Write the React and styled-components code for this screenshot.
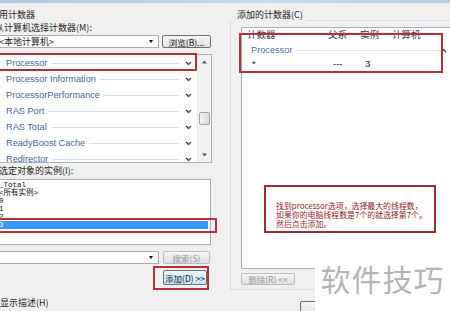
import React from 'react'
import styled, { createGlobalStyle } from 'styled-components'

const GlobalStyle = createGlobalStyle`
    html, body {
        margin: 0;
        padding: 0;
        background: #f0f0f0;
    }
    body {
        font-family: "Liberation Sans", "Noto Sans CJK SC", sans-serif;
    }
`

const cjk = `"Noto Sans CJK SC", "Liberation Sans", sans-serif`
const latin = `"Liberation Sans", "Noto Sans CJK SC", sans-serif`

const Window = styled.div`
    position: relative;
    width: 450px;
    height: 311px;
    overflow: hidden;
    background: #f0f0f0;
`

const TitleStrip = styled.div`
    height: 3px;
    background: linear-gradient(90deg, #aec8e4, #c9dbee 60%, #b7cfe8);
`

const Columns = styled.div`
    display: flex;
`

const LeftPane = styled.div`
    margin-left: -10px;
    width: 222px;
    flex-shrink: 0;
    display: flex;
    flex-direction: column;
    padding-left: 6px;
    box-sizing: border-box;
`

const Caption = styled.div`
    font-family: ${cjk};
    font-size: 9px;
    line-height: 12px;
    height: 12px;
    color: #1f1f1f;
    white-space: nowrap;
    margin-left: ${(p) => p.$indent || 0}px;
    margin-top: ${(p) => p.$top || 0}px;
`

const FieldRow = styled.div`
    display: flex;
    align-items: center;
    gap: ${(p) => p.$gap || 3}px;
    margin-top: ${(p) => p.$top || 0}px;
`

const Combo = styled.div`
    position: relative;
    width: ${(p) => p.$width}px;
    height: 13px;
    box-sizing: border-box;
    border: 1px solid #abadb3;
    background: #fff;
    font-family: ${cjk};
    font-size: 9px;
    line-height: 11px;
    padding-left: 2px;
    color: #222;
    display: flex;
    align-items: center;
`

const DropArrow = styled.span`
    margin-left: auto;
    margin-right: 5px;
    width: 0;
    height: 0;
    border-left: 2.5px solid transparent;
    border-right: 2.5px solid transparent;
    border-top: 3px solid #111;
`

const Button = styled.div`
    width: ${(p) => p.$width}px;
    height: ${(p) => p.$height || 13}px;
    box-sizing: border-box;
    border: 1px solid ${(p) => (p.$disabled ? '#b8bcc2' : '#707070')};
    border-radius: 2px;
    background: ${(p) =>
        p.$primary
            ? 'linear-gradient(#eaf6fd, #bee6fd)'
            : 'linear-gradient(#f6f6f6, #e0e0e0)'};
    font-family: ${cjk};
    font-size: 8.5px;
    color: ${(p) => (p.$disabled ? '#9a9a9a' : '#1b1b1b')};
    display: flex;
    align-items: center;
    justify-content: center;
    white-space: nowrap;
`

const CounterList = styled.div`
    position: relative;
    width: 216px;
    height: 109px;
    margin-top: 6px;
    box-sizing: border-box;
    border: 1px solid #aab0b8;
    background: #fff;
    display: flex;
`

const CounterRows = styled.div`
    flex: 1;
    overflow: hidden;
`

const CounterRow = styled.div`
    height: 16px;
    display: flex;
    align-items: center;
    padding-left: 9px;
    padding-right: 5px;
    font-family: ${latin};
    font-size: 9.2px;
    color: #4a6694;
    white-space: nowrap;
`

const Rule = styled.span`
    flex: 1;
    height: 0;
    border-top: 1px solid #d9e0ea;
    margin: 0 ${(p) => p.$gap || 6}px 0 4px;
`

const Scrollbar = styled.div`
    width: 13px;
    display: flex;
    flex-direction: column;
    background: #f2f2f2;
    border-left: 1px solid #ececec;
`

const ScrollButton = styled.div`
    height: 14px;
    display: flex;
    align-items: center;
    justify-content: center;
`

const Track = styled.div`
    flex: 1;
`

const Thumb = styled.div`
    margin: 43px 1px 0 1px;
    height: 11px;
    border: 1px solid #a2a2a2;
    border-radius: 2px;
    background: linear-gradient(90deg, #f4f4f4, #dcdcdc);
`

const InstanceList = styled.div`
    position: relative;
    width: 215px;
    height: 66px;
    margin-top: 2px;
    box-sizing: border-box;
    border: 1px solid #aab0b8;
    background: #fff;
    padding-top: 1px;
`

const InstanceItem = styled.div`
    height: 8px;
    line-height: 8px;
    padding-left: 2px;
    font-family: "Liberation Mono", "Noto Sans CJK SC", monospace;
    font-size: 7.5px;
    color: ${(p) => (p.$selected ? '#fff' : '#111')};
    background: ${(p) => (p.$selected ? '#3399ff' : 'transparent')};
    margin-right: 2px;
    white-space: nowrap;
`

const Marker = styled.div`
    position: absolute;
    box-sizing: border-box;
    border: 2px solid #b5303c;
    pointer-events: none;
`

const AddRow = styled.div`
    display: flex;
    justify-content: flex-end;
    margin-top: 2px;
    padding-right: 3px;
`

const AddFrame = styled.div`
    border: 2px solid #b5303c;
    padding: 2px 0 3px 8px;
`

const RightPane = styled.div`
    flex: 1;
    padding-left: 18px;
    display: flex;
    flex-direction: column;
`

const GroupHead = styled.div`
    margin-top: 6px;
    height: 12px;
    display: flex;
    align-items: flex-end;
`

const Legend = styled.span`
    font-family: ${cjk};
    font-size: 9px;
    line-height: 12px;
    color: #1f1f1f;
    margin-left: 7px;
    white-space: nowrap;
`

const HeadRule = styled.span`
    flex: 1;
    border-top: 1px solid #d5dde4;
    margin-left: 3px;
`

const GroupBody = styled.div`
    border-left: 1px solid #d8d8d8;
    border-bottom: 1px solid #dcdcdc;
    padding: 6px 0 4px 10px;
`

const AddedList = styled.div`
    position: relative;
    width: 230px;
    height: 242px;
    box-sizing: border-box;
    border: 1px solid #aab0b8;
    background: #fff;
`

const Columns4 = styled.div`
    display: grid;
    grid-template-columns: 81px 32px 32px auto;
    align-items: center;
    height: ${(p) => p.$height}px;
    padding-left: ${(p) => p.$pad}px;
    font-family: ${(p) => (p.$cjk ? cjk : latin)};
    font-size: 9.5px;
    line-height: ${(p) => p.$height}px;
    color: ${(p) => (p.$muted ? '#3a3a3a' : '#222')};
    white-space: nowrap;
`

const GroupRow = styled.div`
    margin-top: 3px;
    height: 14px;
    width: 205px;
    display: flex;
    align-items: center;
    padding-left: 9px;
    box-sizing: border-box;
    font-family: ${latin};
    font-size: 9.2px;
    color: #5a7099;
`

const Note = styled.div`
    position: absolute;
    left: 22px;
    top: 157px;
    width: 172px;
    height: 48px;
    box-sizing: border-box;
    border: 2px solid #9e2c36;
    background: #fffdfd;
    padding: 14px 0 0 10px;
    font-family: ${cjk};
    font-size: 7.9px;
    color: #8f1d27;
    white-space: nowrap;
`

const NoteLine = styled.div`
    height: 9px;
    line-height: 9px;
`

const Footer = styled.div`
    padding: 11px 0 0 70px;
`

const Watermark = styled.div`
    position: absolute;
    left: 315px;
    top: 243px;
    right: 0;
    bottom: 0;
    background: #fff;
    display: flex;
    align-items: center;
    justify-content: center;
    padding-top: 2px;
    font-family: ${cjk};
    font-size: 30px;
    letter-spacing: 1px;
    color: #b4b4b4;
`

const Chevron = ({ up }) => (
    <svg width="7" height="5" viewBox="0 0 7 5">
        <polyline
            points={up ? '1,4 3.5,1.4 6,4' : '1,1 3.5,3.6 6,1'}
            fill="none"
            stroke="#3c5178"
            strokeWidth="1.4"
        />
    </svg>
)

const Caret = ({ up }) => (
    <svg width="5" height="4" viewBox="0 0 5 4">
        <polygon points={up ? '0,3.5 2.5,0.5 5,3.5' : '0,0.5 2.5,3.5 5,0.5'} fill="#555" />
    </svg>
)

const counters = [
    'Processor',
    'Processor Information',
    'ProcessorPerformance',
    'RAS Port',
    'RAS Total',
    'ReadyBoost Cache',
    'Redirector',
]

const instances = ['_Total', '<所有实例>', '0', '1', '2', '3']

const App = () => {
    return (
        <>
            <GlobalStyle />
            <Window>
                <TitleStrip />
                <Columns>
                    <LeftPane>
                        <Caption $indent={-6} $top={6}>可用计数器</Caption>
                        <Caption $top={1} $indent={-1}>从计算机选择计数器(M):</Caption>
                        <FieldRow $top={1}>
                            <Combo $width={163}>
                                &lt;本地计算机&gt;
                                <DropArrow />
                            </Combo>
                            <Button $width={49}>浏览(B)...</Button>
                        </FieldRow>

                        <CounterList>
                            <CounterRows>
                                {counters.map((name) => (
                                    <CounterRow key={name}>
                                        {name}
                                        <Rule />
                                        <Chevron />
                                    </CounterRow>
                                ))}
                            </CounterRows>
                            <Scrollbar>
                                <ScrollButton><Caret up /></ScrollButton>
                                <Track><Thumb /></Track>
                                <ScrollButton><Caret /></ScrollButton>
                            </Scrollbar>
                            <Marker style={{ left: -3, top: -2, width: 203, height: 18 }} />
                        </CounterList>

                        <Caption $top={2} $indent={3}>选定对象的实例(I):</Caption>
                        <InstanceList>
                            {instances.map((item, i) => (
                                <InstanceItem key={item} $selected={i === instances.length - 1}>
                                    {item}
                                </InstanceItem>
                            ))}
                            <Marker style={{ left: -4, right: -7, top: 38, height: 15 }} />
                        </InstanceList>

                        <FieldRow $top={6} $gap={4}>
                            <Combo $width={163}>
                                <DropArrow />
                            </Combo>
                            <Button $width={47} $disabled>搜索(S)</Button>
                        </FieldRow>

                        <AddRow>
                            <AddFrame>
                                <Button $width={44} $height={15} $primary>添加(D) &gt;&gt;</Button>
                            </AddFrame>
                        </AddRow>

                        <Caption $top={7} $indent={4}>显示描述(H)</Caption>
                    </LeftPane>

                    <RightPane>
                        <GroupHead>
                            <Legend>添加的计数器(C)</Legend>
                            <HeadRule />
                        </GroupHead>
                        <GroupBody>
                            <AddedList>
                                <Columns4 $height={12} $pad={5} $cjk $muted>
                                    <span>计数器</span>
                                    <span>父系</span>
                                    <span>实例</span>
                                    <span>计算机</span>
                                </Columns4>
                                <GroupRow>
                                    Processor
                                    <Rule $gap={1} />
                                    <Chevron up />
                                </GroupRow>
                                <Columns4 $height={13} $pad={10}>
                                    <span>*</span>
                                    <span>---</span>
                                    <span>3</span>
                                    <span />
                                </Columns4>
                                <Marker style={{ left: -3, top: 5, width: 204, height: 40 }} />
                                <Note>
                                    <NoteLine>找到processor选项，选择最大的线程数，</NoteLine>
                                    <NoteLine>如果你的电脑线程数是7个的就选择第7个。</NoteLine>
                                    <NoteLine>然后点击添加。</NoteLine>
                                </Note>
                            </AddedList>
                            <Button $width={54} $height={12} $disabled style={{ marginTop: 4 }}>
                                删除(R) &lt;&lt;
                            </Button>
                        </GroupBody>
                        <Footer>
                            <Button $width={50} $height={14} />
                        </Footer>
                    </RightPane>
                </Columns>
                <Watermark>软件技巧</Watermark>
            </Window>
        </>
    )
}

export default App
